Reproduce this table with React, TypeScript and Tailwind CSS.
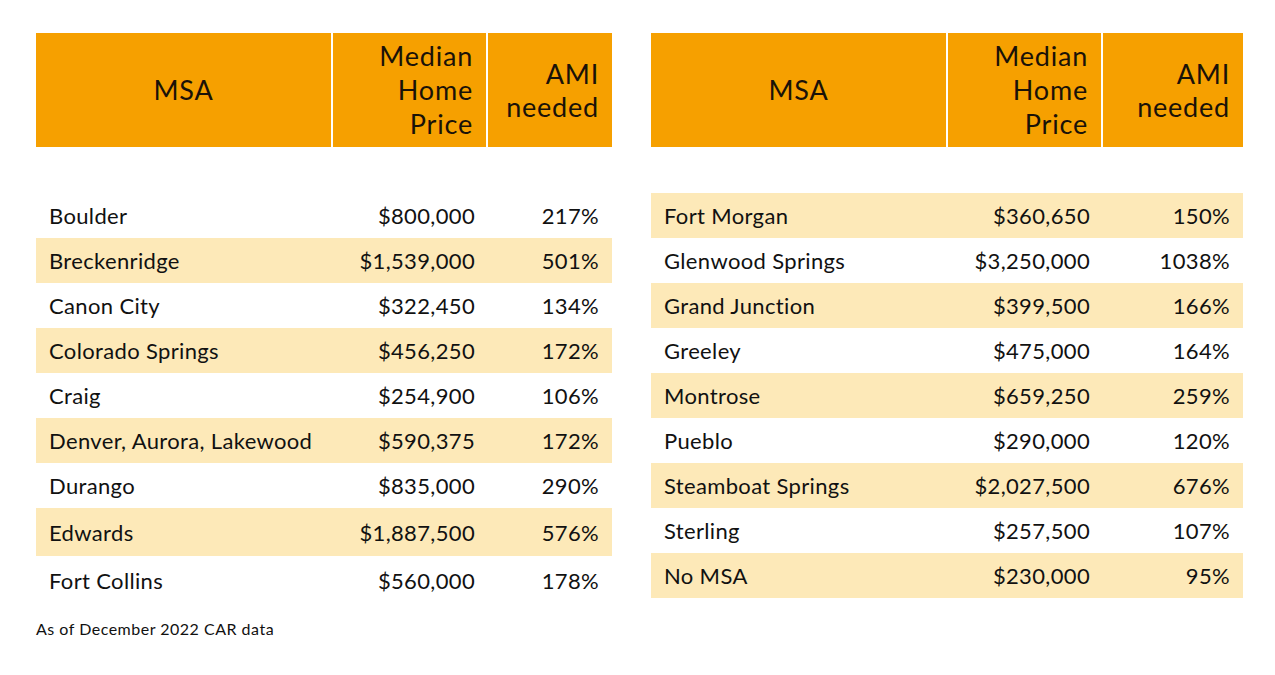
import React from 'react';

type Row = { msa: string; price: string; ami: string };

const LEFT: Row[] = [
  { msa: 'Boulder', price: '$800,000', ami: '217%' },
  { msa: 'Breckenridge', price: '$1,539,000', ami: '501%' },
  { msa: 'Canon City', price: '$322,450', ami: '134%' },
  { msa: 'Colorado Springs', price: '$456,250', ami: '172%' },
  { msa: 'Craig', price: '$254,900', ami: '106%' },
  { msa: 'Denver, Aurora, Lakewood', price: '$590,375', ami: '172%' },
  { msa: 'Durango', price: '$835,000', ami: '290%' },
  { msa: 'Edwards', price: '$1,887,500', ami: '576%' },
  { msa: 'Fort Collins', price: '$560,000', ami: '178%' },
];

const RIGHT: Row[] = [
  { msa: 'Fort Morgan', price: '$360,650', ami: '150%' },
  { msa: 'Glenwood Springs', price: '$3,250,000', ami: '1038%' },
  { msa: 'Grand Junction', price: '$399,500', ami: '166%' },
  { msa: 'Greeley', price: '$475,000', ami: '164%' },
  { msa: 'Montrose', price: '$659,250', ami: '259%' },
  { msa: 'Pueblo', price: '$290,000', ami: '120%' },
  { msa: 'Steamboat Springs', price: '$2,027,500', ami: '676%' },
  { msa: 'Sterling', price: '$257,500', ami: '107%' },
  { msa: 'No MSA', price: '$230,000', ami: '95%' },
];

const PriceTable: React.FC<{ rows: Row[]; striped: 'odd' | 'even'; amiWidth: string }> = ({ rows, striped, amiWidth }) => {
  return (
    <div className="flex flex-col">
      <div className="flex gap-[2px] h-[114px] text-[27px] tracking-[0.8px] leading-[34px] text-[#1a1208]">
        <div className="w-[295px] bg-[#f6a000] flex items-center justify-center">MSA</div>
        <div className="w-[153px] bg-[#f6a000] flex flex-col justify-center items-end pr-[13px]">
          <span>Median</span>
          <span>Home</span>
          <span>Price</span>
        </div>
        <div className={`${amiWidth} bg-[#f6a000] flex flex-col justify-center items-end pr-[13px] leading-[33px]`}>
          <span>AMI</span>
          <span>needed</span>
        </div>
      </div>
      <div className="mt-[46px] flex flex-col text-[22px] tracking-[0.35px] text-[#111]">
        {rows.map((row, i) => {
          const yellow = striped === 'odd' ? i % 2 === 1 : i % 2 === 0;
          const tall = striped === 'odd' && i >= 7;
          return (
            <div
              key={row.msa}
              className={`flex items-center ${tall ? 'h-[48px]' : 'h-[45px]'} ${yellow ? 'bg-[#fde9b8]' : ''}`}
            >
              <div className="w-[297px] pl-[13px]">{row.msa}</div>
              <div className="w-[155px] text-right pr-[13px]">{row.price}</div>
              <div className="flex-1 text-right pr-[13px]">{row.ami}</div>
            </div>
          );
        })}
      </div>
    </div>
  );
};

export default function App() {
  return (
    <div
      className="w-[1275px] h-[675px] bg-white pt-[33px] pl-[36px]"
      style={{ fontFamily: '"Lato", "Liberation Sans", sans-serif' }}
    >
      <div className="flex gap-[39px]">
        <div className="w-[576px]">
          <PriceTable rows={LEFT} striped="odd" amiWidth="w-[124px]" />
        </div>
        <div className="w-[592px]">
          <PriceTable rows={RIGHT} striped="even" amiWidth="w-[140px]" />
        </div>
      </div>
      <div className="mt-[13px] text-[16px] tracking-[0.5px] text-[#111]">As of December 2022 CAR data</div>
    </div>
  );
}
